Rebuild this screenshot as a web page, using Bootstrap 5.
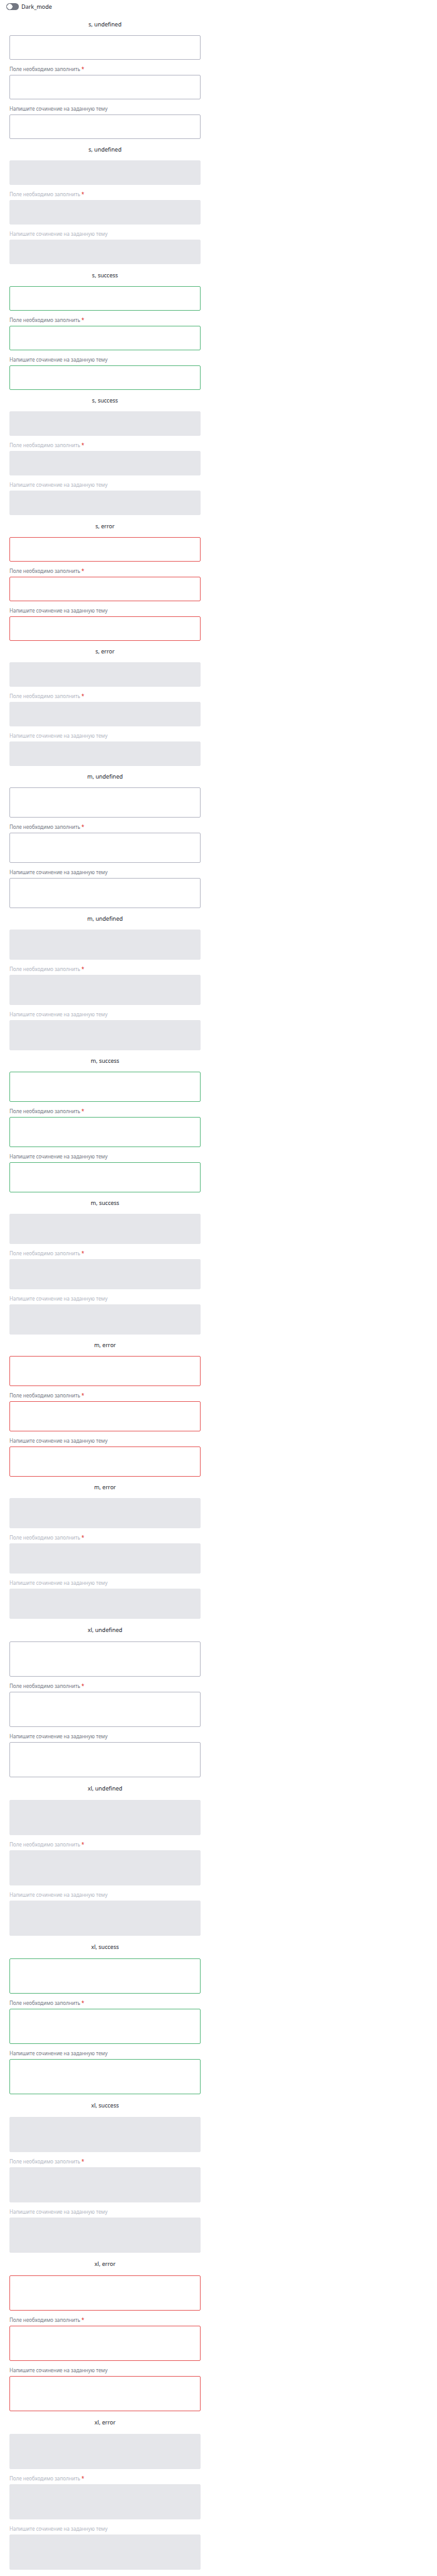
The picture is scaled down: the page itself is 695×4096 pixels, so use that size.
<!DOCTYPE html>
<html lang="ru">
<head>
<meta charset="utf-8">
<meta name="viewport" content="width=device-width, initial-scale=1">
<title>Textarea</title>
<link href="https://cdn.jsdelivr.net/npm/bootstrap@5.3.0/dist/css/bootstrap.min.css" rel="stylesheet">
<style>
  body { font-family: "Noto Sans", sans-serif; font-size: 9px; line-height: 12px; color: #21242c; background: #fff; }
  .topbar { height: 21px; min-height: 0; padding: 0 10px; gap: 4px; }
  .topbar .form-check-input { width: 20px; height: 11px; margin: 0; border: 0; background-color: #737782;
    background-image: radial-gradient(circle closest-side, #fff 90%, transparent); background-size: 9px 9px; background-position: 1px center; }
  .topbar .form-check-input:checked { background-position: 10px center; }
  .showcase { max-width: 334px; padding: 0 15px 11px; }
  .case-title { height: 34px; margin: 0; font-size: 9px; font-weight: 400; line-height: 12px; }
  .size-s .state-on .case-title { height: 35px; }
  .size-xl .case-title { height: 36px; }
  .field-label { font-size: 8px; line-height: 12px; margin: 9px 0 3px; color: #737782; }
  .state-off .field-label { color: #b2b6bf; }
  .field-label .req { color: #dc2020; }
  .field-area { display: block; padding: 4px 6px; font-size: 9px; line-height: 12px; min-height: 0; resize: none; border: 1px solid #b4b6c3; border-radius: 2px; }
  .size-s .field-area { height: 39px; }
  .size-m .field-area { height: 48px; }
  .size-xl .field-area { height: 56px; }
  .is-success .field-area { border-color: #56b87c; }
  .is-error .field-area { border-color: #e65858; }
  .field-area:disabled { background: #e5e6ea; border-color: #e5e6ea; }
</style>
</head>
<body>
<header class="topbar form-check form-switch d-flex align-items-center m-0">
  <input class="form-check-input" type="checkbox" role="switch" id="dark-mode">
  <label for="dark-mode">Dark_mode</label>
</header>
<main class="showcase" id="showcase"></main>

<script src="https://cdn.jsdelivr.net/npm/bootstrap@5.3.0/dist/js/bootstrap.bundle.min.js"></script>
<script>
  const labels = ['', 'Поле необходимо заполнить <span class="req">*</span>', 'Напишите сочинение на заданную тему'];
  let html = '';
  for (const size of ['s', 'm', 'xl']) {
    html += `<div class="size-${size}">`;
    for (const status of ['undefined', 'success', 'error']) {
      for (const state of ['on', 'off']) {
        html += `<section class="state-${state} is-${status}">
          <h2 class="case-title d-flex align-items-center justify-content-center">${size}, ${status}</h2>`;
        labels.forEach((label, i) => {
          const id = `${size}-${status}-${state}-${i}`;
          html += (label ? `<label class="field-label d-block" for="${id}">${label}</label>` : '') +
            `<textarea class="field-area form-control" id="${id}"${label ? '' : ` aria-label="${size}, ${status}"`}${i === 1 ? ' required' : ''}${state === 'off' ? ' disabled' : ''}></textarea>`;
        });
        html += '</section>';
      }
    }
    html += '</div>';
  }
  document.getElementById('showcase').innerHTML = html;
</script>
</body>
</html>
